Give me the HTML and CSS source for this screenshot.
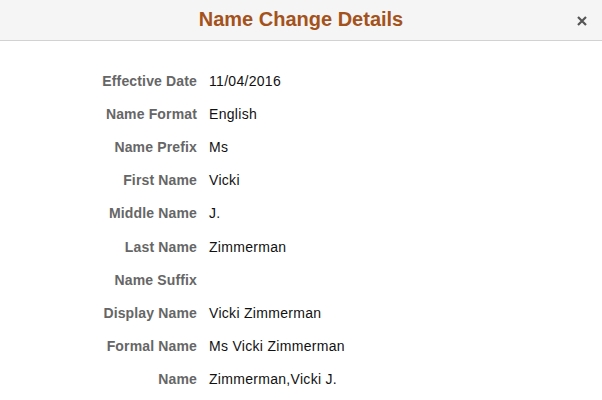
FILE: index.html
```html
<!DOCTYPE html>
<html lang="en">
<head>
    <meta charset="UTF-8">
    <meta name="viewport" content="width=device-width, initial-scale=1.0">
    <title>Name Change Details</title>
    <link rel="stylesheet" href="styles.css">
</head>
<body>
    <div class="header">
        <h1>Name Change Details</h1>
        <button class="close" title="Close">
            <svg width="12" height="12" viewBox="0 0 12 12">
                <path d="M2 2L10 10M10 2L2 10" stroke="#555" stroke-width="2.2" fill="none"/>
            </svg>
        </button>
    </div>

    <div class="details">
        <div class="label">Effective Date</div>
        <div class="value">11/04/2016</div>

        <div class="label">Name Format</div>
        <div class="value">English</div>

        <div class="label">Name Prefix</div>
        <div class="value">Ms</div>

        <div class="label">First Name</div>
        <div class="value">Vicki</div>

        <div class="label">Middle Name</div>
        <div class="value">J.</div>

        <div class="label">Last Name</div>
        <div class="value">Zimmerman</div>

        <div class="label">Name Suffix</div>
        <div class="value"></div>

        <div class="label">Display Name</div>
        <div class="value">Vicki Zimmerman</div>

        <div class="label">Formal Name</div>
        <div class="value">Ms Vicki Zimmerman</div>

        <div class="label">Name</div>
        <div class="value">Zimmerman,Vicki J.</div>
    </div>
</body>
</html>
```

FILE: styles.css
```css
body {
    margin: 0;
    font-family: "Liberation Sans", Arial, sans-serif;
    font-size: 14px;
    background-color: #fff;
}
.header {
    position: relative;
    height: 40px;
    background-color: #f5f5f5;
    border-bottom: 1px solid #d2d2d2;
    display: flex;
    align-items: center;
    justify-content: center;
}
h1 {
    margin: 0;
    font-size: 20px;
    font-weight: bold;
    color: #a4521b;
    line-height: 23px;
    margin-top: -2px;
}
.close {
    position: absolute;
    right: 14px;
    top: 15px;
    padding: 0;
    border: none;
    background: none;
    width: 12px;
    height: 12px;
    cursor: pointer;
}
.close svg {
    display: block;
}
.details {
    display: grid;
    grid-template-columns: 197px auto;
    grid-auto-rows: 33.1px;
    column-gap: 12px;
    padding-top: 24px;
    align-items: center;
    line-height: 17px;
}
.label {
    text-align: right;
    font-weight: bold;
    color: #666;
    letter-spacing: 0.15px;
}
.value {
    color: #111;
    letter-spacing: 0.3px;
}
```
